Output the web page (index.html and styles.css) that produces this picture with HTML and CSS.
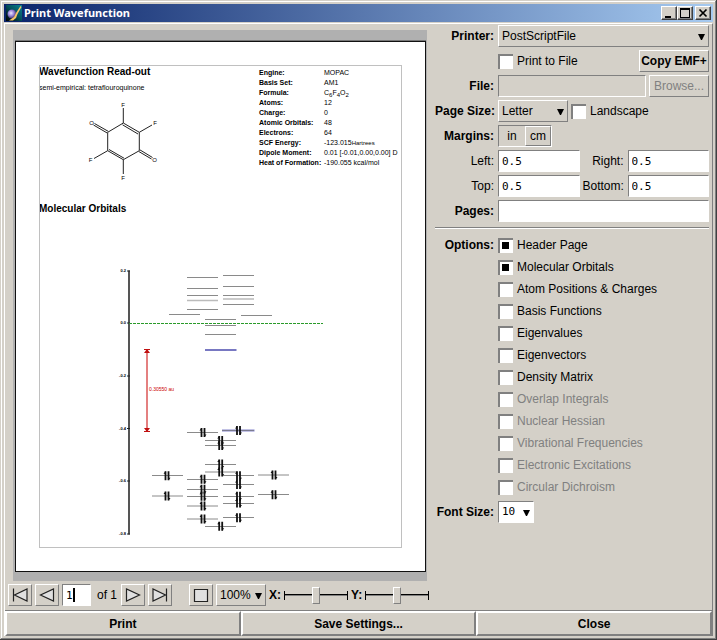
FILE: index.html
```html
<!DOCTYPE html>
<html lang="en">
<head>
<meta charset="utf-8">
<title>Print Wavefunction</title>
<link rel="stylesheet" href="styles.css">
</head>
<body>
<div class="window">
  <header class="titlebar">
    <svg class="app-icon" viewBox="0 0 16 16" aria-hidden="true">
      <defs>
        <linearGradient id="teal" x1="0" y1="1" x2="1" y2="0"><stop offset="0" stop-color="#000"/><stop offset=".55" stop-color="#045560"/><stop offset="1" stop-color="#088090"/></linearGradient>
        <radialGradient id="ball" cx=".4" cy=".4" r=".6"><stop offset="0" stop-color="#eee8ff"/><stop offset=".5" stop-color="#9a88dc"/><stop offset="1" stop-color="#40306c"/></radialGradient>
      </defs>
      <rect width="16" height="16" fill="url(#teal)"/>
      <circle cx="6" cy="9" r="4.5" fill="url(#ball)"/>
      <path d="M14.5 1 10 8 8 12 3 15.5H7L10 13 11.5 9 15.5 2Z" fill="#f6c469"/>
    </svg>
    <h1>Print Wavefunction</h1>
    <div class="caption-buttons">
      <button type="button" aria-label="Minimize"><svg viewBox="0 0 12 10"><path d="M2 8h6v2H2z"/></svg></button>
      <button type="button" aria-label="Maximize"><svg viewBox="0 0 12 10"><path d="M1 0h10v10H1zM2 2v7h8V2z" fill-rule="evenodd"/></svg></button>
      <button type="button" aria-label="Close window" class="caption-close"><svg viewBox="0 0 12 10"><path d="M2.500 1.500 9.500 8.500M9.500 1.500 2.500 8.500" stroke="#000" stroke-width="1.700"/></svg></button>
    </div>
  </header>

  <form class="dialog">
    <main class="main">
      <section class="left">
        <div class="preview">
          <article class="page">
            <div class="frame">
              <div class="readout">
                <div>
                  <h2>Wavefunction Read-out</h2>
                  <p>semi-empirical: tetraflouroquinone</p>
                  <svg class="molecule" viewBox="39 98 220 88" role="img" aria-label="Molecule">
                    <g fill="none" stroke="#222" stroke-width="1">
                      <path d="M123.300 124 139.300 133.300V151.700L123.300 160.700 107.700 151.700V133.300Z"/>
                      <path d="M122.500 125.800 138 135M109 150.500 124 159.200"/>
                      <path d="M123.300 124V109M139.300 133.300 152 126M107.700 151.700 94 159.500M123.300 160.700V175"/>
                      <path d="M107.200 134 93.500 126M108.200 132.300 94.500 124.500M138.800 152.500 151.500 160M139.800 150.800 152.500 158.500"/>
                    </g>
                    <g class="atoms">
                      <text x="123" y="108">F</text><text x="91.500" y="126">O</text><text x="155" y="126">F</text>
                      <text x="154.500" y="163">O</text><text x="90.500" y="163">F</text><text x="123" y="181">F</text>
                    </g>
                  </svg>
                </div>
                <table>
                  <tr><th scope="row">Engine:</th><td>MOPAC</td></tr>
                  <tr><th scope="row">Basis Set:</th><td>AM1</td></tr>
                  <tr><th scope="row">Formula:</th><td>C<sub>6</sub>F<sub>4</sub>O<sub>2</sub></td></tr>
                  <tr><th scope="row">Atoms:</th><td>12</td></tr>
                  <tr><th scope="row">Charge:</th><td>0</td></tr>
                  <tr><th scope="row">Atomic Orbitals:</th><td>48</td></tr>
                  <tr><th scope="row">Electrons:</th><td>64</td></tr>
                  <tr><th scope="row">SCF Energy:</th><td>-123.015<small>Hartrees</small></td></tr>
                  <tr><th scope="row">Dipole Moment:</th><td>0.01 [-0.01,0.00,0.00] D</td></tr>
                  <tr><th scope="row">Heat of Formation:</th><td>-190.055 kcal/mol</td></tr>
                </table>
              </div>
              <h2>Molecular Orbitals</h2>
              <svg class="orbitals" viewBox="39 216 363 332" role="img" aria-label="Molecular orbital energies">
                <defs>
                  <g id="pair"><path d="M-1.500-4.500V4.500M1.500-4.500V4.500" stroke="#111" stroke-width="1.800"/><path d="M-3.500-2-1.500-4.500V-2ZM3.500 2 1.500 4.500V2Z" fill="#111"/></g>
                </defs>
                <path d="M129 270.500V534.500" stroke="#555" stroke-width="2"/>
                <path d="M127 271h3M127 323h3M127 376h3M127 428.500h3M127 481h3M127 534h3" stroke="#222"/>
                <g class="scale">
                  <text x="126" y="272">0.2</text><text x="126" y="324">0.0</text><text x="126" y="377">-0.2</text>
                  <text x="126" y="430">-0.4</text><text x="126" y="482">-0.6</text><text x="126" y="535">-0.8</text>
                </g>
                <path d="M129 323.500H323" stroke="#2a9a2a" stroke-width="1.200" stroke-dasharray="3 1"/>
                <g stroke="#8a8a8a" stroke-width="1">
                  <path d="M187 277.500h31M187 288.500h31M187 295.500h31M187 309.500h31M223 275.500h31M223 286.500h31M223 295.500h31M223 304.500h31M169 314.500h31M241 315.500h31M205 319.500h31M205 325.500h31M205 334.500h31"/>
                  <path d="M187 300.500h31M223 299h31" stroke="#bbb" stroke-width="1.500"/>
                  <path d="M187 432.500h31M205 440.500h31M205 445.500h31M205 464.500h31M205 472h31M205 526.500h31M187 479.500h31M187 489.500h31M187 496.500h31M187 506h31M187 519h31M223 475.500h31M223 484.500h31M223 496.500h31M223 503.500h31M223 517.500h31M152 475.500h31M152 496h31M258 475h31M258 494.500h31"/>
                </g>
                <path d="M205 350h31.500" stroke="#6060b8" stroke-width="1.700"/>
                <path d="M222 430.500h32.500" stroke="#8585cc" stroke-width="2"/>
                <path d="M222 430.500h32" stroke="#777" stroke-width=".7"/>
                <use href="#pair" x="203" y="432.500"/><use href="#pair" x="238.500" y="430.500"/>
                <use href="#pair" x="220.700" y="440.500"/><use href="#pair" x="220.700" y="445.500"/>
                <use href="#pair" x="220.700" y="464"/><use href="#pair" x="220.700" y="472"/><use href="#pair" x="220.700" y="526.300"/>
                <use href="#pair" x="203" y="479.300"/><use href="#pair" x="203" y="489.300"/><use href="#pair" x="203" y="496.300"/>
                <use href="#pair" x="203" y="506"/><use href="#pair" x="203" y="519"/>
                <use href="#pair" x="238.500" y="475.700"/><use href="#pair" x="238.500" y="484.500"/><use href="#pair" x="238.500" y="496.300"/>
                <use href="#pair" x="238.500" y="503"/><use href="#pair" x="238.500" y="517.700"/>
                <use href="#pair" x="167" y="475.700"/><use href="#pair" x="167" y="496"/>
                <use href="#pair" x="274" y="475"/><use href="#pair" x="274" y="494.700"/>
                <path d="M147 350V431" stroke="#e06a6a" stroke-width="1.700"/>
                <path d="M144 349.500h6M144 431.500h6" stroke="#c01010"/>
                <path d="M147 349 150 353h-6ZM147 432 150 428h-6Z" fill="#c01010"/>
                <text class="gap-label" x="149" y="391">0.30550 au</text>
              </svg>
            </div>
          </article>
        </div>

        <div class="toolbar">
          <button type="button" class="tool" aria-label="First page"><svg viewBox="0 0 18 16"><path d="M2.500 1.500v13M16 2v12L3.500 8Z"/></svg></button>
          <button type="button" class="tool" aria-label="Previous page"><svg viewBox="0 0 18 16"><path d="M15.500 2v12L2.500 8Z"/></svg></button>
          <span class="page-entry"><input type="text" value="1" aria-label="Page number"><i class="caret"></i></span>
          <span class="page-count">of 1</span>
          <button type="button" class="tool" aria-label="Next page"><svg viewBox="0 0 18 16"><path d="M2.500 2v12L15.500 8Z"/></svg></button>
          <button type="button" class="tool" aria-label="Last page"><svg viewBox="0 0 18 16"><path d="M15.500 1.500v13M2 2v12L14.500 8Z"/></svg></button>
          <button type="button" class="tool fit" aria-label="Fit page"><svg viewBox="0 0 18 16"><path d="M2.500 2.500h13v12h-13Z"/></svg></button>
          <select class="raised zoom" aria-label="Zoom"><option>100%</option></select>
          <label class="bold" for="xpos">X:</label><input type="range" id="xpos" value="50">
          <label class="bold" for="ypos">Y:</label><input type="range" id="ypos" value="50">
        </div>
      </section>

      <section class="settings">
        <div class="row"><label class="name" for="printer">Printer:</label><select id="printer" class="raised grow"><option>PostScriptFile</option></select></div>
        <div class="row"><span class="name"></span><label class="check grow"><input type="checkbox">Print to File</label><button type="button" class="raised wide bold">Copy EMF+</button></div>
        <div class="row"><label class="name" for="file">File:</label><input type="text" id="file" class="grow" disabled><button type="button" class="raised browse" disabled>Browse...</button></div>
        <div class="row"><label class="name" for="size">Page Size:</label><select id="size" class="raised wide"><option>Letter</option></select><label class="check"><input type="checkbox">Landscape</label></div>
        <div class="row"><span class="name">Margins:</span><div class="units"><button type="button" class="pressed" aria-pressed="true">in</button><button type="button" aria-pressed="false">cm</button></div></div>
        <div class="row pair"><label for="left">Left:</label><input type="text" id="left" value="0.5"><label for="right">Right:</label><input type="text" id="right" value="0.5"></div>
        <div class="row pair"><label for="top">Top:</label><input type="text" id="top" value="0.5"><label for="bottom">Bottom:</label><input type="text" id="bottom" value="0.5"></div>
        <div class="row"><label class="name" for="pages">Pages:</label><input type="text" id="pages" class="grow"></div>
        <hr>
        <div class="row options"><span class="name">Options:</span>
          <div class="checks">
            <label class="check"><input type="checkbox" checked>Header Page</label>
            <label class="check"><input type="checkbox" checked>Molecular Orbitals</label>
            <label class="check"><input type="checkbox">Atom Positions &amp; Charges</label>
            <label class="check"><input type="checkbox">Basis Functions</label>
            <label class="check"><input type="checkbox">Eigenvalues</label>
            <label class="check"><input type="checkbox">Eigenvectors</label>
            <label class="check"><input type="checkbox">Density Matrix</label>
            <label class="check off"><input type="checkbox" disabled>Overlap Integrals</label>
            <label class="check off"><input type="checkbox" disabled>Nuclear Hessian</label>
            <label class="check off"><input type="checkbox" disabled>Vibrational Frequencies</label>
            <label class="check off"><input type="checkbox" disabled>Electronic Excitations</label>
            <label class="check off"><input type="checkbox" disabled>Circular Dichroism</label>
          </div>
        </div>
        <div class="row"><label class="name" for="font-size">Font Size:</label><select id="font-size" class="sunken"><option>10</option></select></div>
      </section>
    </main>

    <footer class="actions">
      <button type="button">Print</button>
      <button type="button">Save Settings...</button>
      <button type="button">Close</button>
    </footer>
  </form>
</div>
</body>
</html>
```

FILE: styles.css
```css
:root {
  --face: #d4d0c8;
  --shade: #808080;
  --arrow: url("data:image/svg+xml,%3Csvg xmlns='http://www.w3.org/2000/svg' width='7' height='7'%3E%3Cpath d='M0 1H7L4 7H3Z'/%3E%3C/svg%3E");
}

* { box-sizing: border-box; }

body {
  margin: 0;
  background: var(--face);
  color: #000;
  font: 12px/16px "Liberation Sans", Arial, sans-serif;
}

h1, h2, p { margin: 0; }

button, input, select {
  appearance: none;
  margin: 0;
  padding: 0;
  border: 0;
  border-radius: 0;
  outline: 0;
  background: transparent;
  color: inherit;
  font: inherit;
}

.bold, .name { font-weight: bold; }

/* Window frame and caption */
.window {
  display: flex;
  flex-direction: column;
  min-height: 100vh;
  padding: 4px;
  background: var(--face);
  box-shadow: inset -1px -1px #404040, inset 1px 1px var(--face),
    inset -2px -2px var(--shade), inset 2px 2px #fff;
}

.titlebar {
  display: flex;
  align-items: center;
  gap: 2px;
  height: 18px;
  margin-bottom: 1px;
  padding: 0 2px;
  background: linear-gradient(90deg, #0a246a, #a6caf0);
}

.app-icon { width: 16px; height: 16px; }

.titlebar h1 {
  flex: 1;
  color: #fff;
  font: bold 11px/16px "Noto Sans", Tahoma, sans-serif;
}

.caption-buttons { display: flex; }

.caption-buttons button {
  width: 16px;
  height: 14px;
  padding: 1px;
  background: var(--face);
  border: 1px solid;
  border-color: #fff #404040 #404040 #fff;
  box-shadow: inset -1px -1px var(--shade);
}

.caption-buttons .caption-close { margin-left: 2px; }
.caption-buttons svg { display: block; width: 12px; height: 10px; }

.dialog {
  display: flex;
  flex: 1;
  flex-direction: column;
  border: 1px solid;
  border-color: #fff var(--shade) transparent #fff;
  border-bottom: 0;
}

.main {
  display: flex;
  flex: 1;
  gap: 4px;
  padding: 0 3px;
}

.left { flex: 1; min-width: 0; }

/* Page preview */
.preview {
  margin: 6px 4px 3px 5px;
  padding: 11px 1px 9px 2px;
  background: #b0b0b0;
}

.page {
  padding: 23px;
  background: #fff;
  border: 1px solid #111;
  box-shadow: 0 -1px #777;
}

.frame {
  outline: 1px solid #c0c0c0;
  outline-offset: -1px;
}

.page h2 { font-size: 10px; line-height: 14px; }
.page p { padding: 2px 0; font-size: 7px; line-height: 14px; }

.readout {
  display: grid;
  grid-template-columns: 220fr 143fr;
  align-items: start;
  min-height: 137px;
}

.page svg { display: block; width: 100%; }
.atoms { font-size: 6px; text-anchor: middle; }
.scale { font-size: 4px; font-weight: bold; text-anchor: end; }
.gap-label { fill: #c00; font-size: 5px; }

.page table {
  margin-top: 3px;
  border-collapse: collapse;
  font-size: 7px;
  line-height: 10px;
  white-space: nowrap;
}

.page tr { height: 10px; }
.page th { width: 65px; padding: 0; text-align: left; }
.page td { padding: 0; }
.page small { font-size: 6px; }
.page sub { font-size: 6px; line-height: 0; vertical-align: -2px; }

/* Preview toolbar */
.toolbar {
  display: flex;
  align-items: center;
  gap: 3px;
  height: 22px;
  margin-bottom: 3px;
  white-space: nowrap;
}

.raised, .tool {
  background-color: var(--face);
  border: 1px solid;
  border-color: #fff var(--shade) var(--shade) #fff;
}

.tool {
  flex: none;
  width: 24px;
  height: 22px;
  padding: 2px;
}

.tool svg {
  display: block;
  width: 18px;
  height: 16px;
  fill: #e0e0e0;
  stroke: #222;
  stroke-width: 1.2;
}

.tool.fit { margin-left: 14px; }

input[type="text"], .sunken {
  min-width: 0;
  height: 22px;
  padding: 0 3px;
  background-color: #fff;
  border: 1px solid;
  border-color: var(--shade) #fff #fff var(--shade);
  font: 11px/16px "DejaVu Sans Mono", monospace;
}

input[type="text"]:disabled {
  background-color: var(--face);
}

.page-entry { position: relative; display: flex; }
.page-entry input { width: 29px; }

.caret {
  position: absolute;
  top: 4px;
  left: 11px;
  width: 2px;
  height: 14px;
  background: #000;
}

.page-count { margin: 0 1px 0 3px; }

select {
  height: 22px;
  padding: 0 3px;
  background-image: var(--arrow);
  background-repeat: no-repeat;
  background-position: right 3px center;
}

.zoom { width: 50px; }

input[type="range"] {
  width: 64px;
  height: 20px;
  background:
    linear-gradient(#000, #000) 0 50% / 1px 9px,
    linear-gradient(#000, #000) 100% 50% / 1px 9px,
    linear-gradient(#000 50%, #808080 50%) 50% 50% / 100% 2px;
  background-repeat: no-repeat;
}

input[type="range"]::-webkit-slider-thumb {
  appearance: none;
  width: 8px;
  height: 17px;
  background: var(--face);
  border: 1px solid;
  border-color: #fff var(--shade) var(--shade) #fff;
}

/* Print settings */
.settings {
  display: flex;
  flex: none;
  flex-direction: column;
  gap: 3px;
  width: 274px;
  padding-top: 1px;
}

.row {
  display: flex;
  align-items: center;
  gap: 3px;
  min-height: 22px;
}

.name {
  flex: none;
  width: 60px;
  padding-right: 1px;
  text-align: right;
  white-space: nowrap;
}

.grow { flex: 1; min-width: 0; }
.wide { width: 70px; height: 22px; }
.browse { width: 60px; height: 22px; }
.browse:disabled, .off { color: var(--shade); }

.check {
  display: flex;
  align-items: center;
  gap: 4px;
}

input[type="checkbox"] {
  width: 15px;
  height: 15px;
  background: #fff;
  border: solid var(--shade);
  border-width: 2px 0 0 2px;
}

input[type="checkbox"]:checked {
  background: linear-gradient(#000, #000) 2px 2px / 7px 7px no-repeat #fff;
}

.units {
  display: flex;
  height: 22px;
  border: 1px solid;
  border-color: var(--shade) #fff #fff var(--shade);
}

.units button {
  width: 26px;
  border: 1px solid;
  border-color: #fff var(--shade) var(--shade) #fff;
}

.units .pressed { border-color: transparent; }

.pair {
  display: grid;
  grid-template-columns: 60px 1fr 42px 1fr;
}

.pair label { padding-right: 1px; text-align: right; }

.settings hr {
  width: 100%;
  height: 2px;
  margin: 2px 0;
  border: solid;
  border-width: 1px 0;
  border-color: var(--shade) #fff #fff;
}

.options { align-items: flex-start; }
.options .name, .checks .check { height: 22px; line-height: 22px; }

#font-size {
  width: 36px;
}

/* Dialog buttons */
.actions {
  display: flex;
  border-top: 1px solid var(--shade);
}

.actions button {
  flex: 1;
  height: 25px;
  border: 2px solid;
  border-color: #fff var(--shade) var(--shade) #fff;
  font-weight: bold;
}
```
